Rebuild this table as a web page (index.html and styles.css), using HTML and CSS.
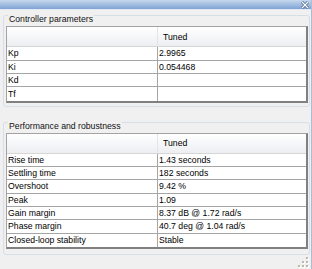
FILE: index.html
```html
<!DOCTYPE html>
<html>
<head>
<meta charset="utf-8">
<link rel="stylesheet" href="styles.css">
</head>
<body>
<div class="window">
  <div class="titlebar">
    <svg class="close" width="8" height="8" viewBox="0 0 8 8"><path d="M1 1L7 7M7 1L1 7" stroke="#3d5c88" stroke-width="2.6"/><path d="M1 1L7 7M7 1L1 7" stroke="#fff" stroke-width="1.3"/></svg>
  </div>
  <div class="content">
    <div class="group">
      <div class="group-title">Controller parameters</div>
      <div class="grid">
        <div class="row head"><div class="c-name"></div><div class="c-val">Tuned</div></div>
        <div class="row"><div class="c-name">Kp</div><div class="c-val">2.9965</div></div>
        <div class="row"><div class="c-name">Ki</div><div class="c-val">0.054468</div></div>
        <div class="row"><div class="c-name">Kd</div><div class="c-val"></div></div>
        <div class="row"><div class="c-name">Tf</div><div class="c-val"></div></div>
      </div>
    </div>
    <div class="group second">
      <div class="group-title">Performance and robustness</div>
      <div class="grid">
        <div class="row head"><div class="c-name"></div><div class="c-val">Tuned</div></div>
        <div class="row"><div class="c-name">Rise time</div><div class="c-val">1.43 seconds</div></div>
        <div class="row"><div class="c-name">Settling time</div><div class="c-val">182 seconds</div></div>
        <div class="row"><div class="c-name">Overshoot</div><div class="c-val">9.42 %</div></div>
        <div class="row"><div class="c-name">Peak</div><div class="c-val">1.09</div></div>
        <div class="row"><div class="c-name">Gain margin</div><div class="c-val">8.37 dB @ 1.72 rad/s</div></div>
        <div class="row"><div class="c-name">Phase margin</div><div class="c-val">40.7 deg @ 1.04 rad/s</div></div>
        <div class="row"><div class="c-name">Closed-loop stability</div><div class="c-val">Stable</div></div>
      </div>
    </div>
  </div>
  <div class="statusbar">
    <svg class="grip" width="12" height="12" viewBox="0 0 12 12">
      <g fill="#ffffff"><rect x="10" y="10" width="2" height="2"/><rect x="6" y="10" width="2" height="2"/><rect x="2" y="10" width="2" height="2"/><rect x="10" y="6" width="2" height="2"/><rect x="6" y="6" width="2" height="2"/><rect x="10" y="2" width="2" height="2"/></g>
      <g fill="#bdb8aa"><rect x="9" y="9" width="2" height="2"/><rect x="5" y="9" width="2" height="2"/><rect x="1" y="9" width="2" height="2"/><rect x="9" y="5" width="2" height="2"/><rect x="5" y="5" width="2" height="2"/><rect x="9" y="1" width="2" height="2"/></g>
    </svg>
  </div>
</div>
</body>
</html>
```
FILE: styles.css
```css
html, body {
  margin: 0;
  padding: 0;
}
body {
  width: 312px;
  height: 269px;
  overflow: hidden;
  background: #f0f0f0;
  font-family: "Liberation Sans", Arial, sans-serif;
  font-size: 8.7px;
  color: #000;
}
.window {
  height: 269px;
  box-sizing: border-box;
  border-right: 1px solid #a9bdd7;
  display: flex;
  flex-direction: column;
}
.titlebar {
  height: 10px;
  background: linear-gradient(#c6d8ee, #7fa3d3);
  border-bottom: 1px solid #e2e9f2;
  display: flex;
  justify-content: flex-end;
  align-items: center;
  padding-right: 2px;
}
.close {
  display: block;
}
.content {
  flex: 1;
  padding: 5px 1px 0 3px;
}
.group {
  display: flex;
  flex-direction: column;
  border: 1px solid #d5dfe5;
  border-radius: 3px;
  padding: 0 1px 3px 1px;
}
.group.second {
  margin-top: 15px;
  padding-bottom: 5px;
}
.group-title {
  align-self: flex-start;
  margin: -2px 0 2px 3px;
  padding: 0 1px;
  line-height: 10px;
  background: #f0f0f0;
  color: #111;
}
.grid {
  margin-left: 1px;
  background: #fff;
  border-top: 1px solid #a3a3a3;
  border-left: 1px solid #a3a3a3;
  border-right: 2px solid #808080;
  border-bottom: 2px solid #808080;
}
.row {
  display: flex;
  height: 13.33px;
  box-sizing: border-box;
  border-bottom: 1px solid #a5a5a5;
}
.row:last-child {
  border-bottom: none;
}
.row.head {
  height: 20px;
  background: linear-gradient(#ffffff, #eceef1);
  border-bottom: 1px solid #d6d6d6;
}
.c-name {
  width: 151px;
  box-sizing: border-box;
  border-right: 1px solid #a5a5a5;
  padding-left: 1px;
  display: flex;
  align-items: center;
  white-space: nowrap;
}
.c-val {
  flex: 1;
  padding-left: 1px;
  display: flex;
  align-items: center;
  white-space: nowrap;
}
.head .c-name {
  border-right-color: #e2e4e7;
}
.head .c-val {
  padding-left: 5px;
}
.statusbar {
  height: 14px;
  display: flex;
  justify-content: flex-end;
  align-items: flex-end;
  padding: 0 2px 1px 0;
}
.grip {
  display: block;
}
```
